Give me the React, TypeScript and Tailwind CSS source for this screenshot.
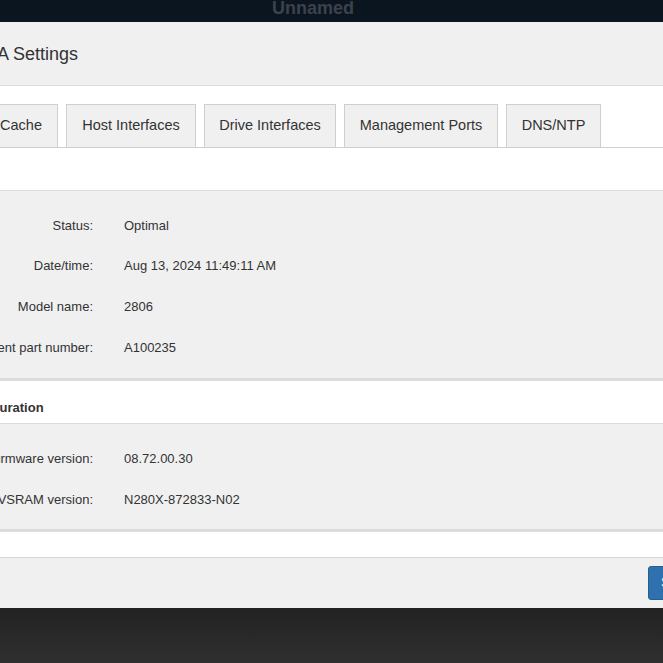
const rowsGeneral = [
  { label: "Status:", value: "Optimal" },
  { label: "Date/time:", value: "Aug 13, 2024 11:49:11 AM" },
  { label: "Model name:", value: "2806" },
  { label: "Replacement part number:", value: "A100235" },
];

const rowsFirmware = [
  { label: "Firmware version:", value: "08.72.00.30" },
  { label: "NVSRAM version:", value: "N280X-872833-N02" },
];

const tabs = [
  { name: "Base", w: "w-[65px]" },
  { name: "Cache", w: "w-[74px]" },
  { name: "Host Interfaces", w: "w-[130px]" },
  { name: "Drive Interfaces", w: "w-[132px]" },
  { name: "Management Ports", w: "w-[154px]" },
  { name: "DNS/NTP", w: "w-[95px]" },
];

function InfoRows({ rows }: { rows: { label: string; value: string }[] }) {
  return (
    <div className="flex flex-col">
      {rows.map((r) => (
        <div key={r.label} className="flex h-[40.67px] items-center text-[13px] text-[#333]">
          <div className="w-[213px] shrink-0 whitespace-nowrap text-right">{r.label}</div>
          <div className="pl-[31px] whitespace-nowrap">{r.value}</div>
        </div>
      ))}
    </div>
  );
}

export default function App() {
  return (
    <div
      className="relative h-[663px] w-[663px] overflow-hidden bg-[#2b2b2b]"
      style={{ fontFamily: '"Liberation Sans", Arial, sans-serif' }}
    >
      {/* top bar */}
      <div className="flex h-[22px] justify-center bg-[#0b1520] pr-[37px]">
        <span className="mt-[-1px] text-[18px] font-bold leading-none text-[#3b424b]">Unnamed</span>
      </div>

      {/* dialog */}
      <div className="ml-[-120px] w-[900px] bg-[#f0f0f0]">
        <div className="flex h-[64px] items-center border-b border-[#dcdcdc] pl-[35px] pt-[1px]">
          <h2 className="whitespace-nowrap text-[18px] text-[#333]">Controller A Settings</h2>
        </div>

        <div className="bg-white">
          <div className="flex gap-[8px] border-b border-[#cfcfcf] pl-[31px] pt-[18px]">
            {tabs.map((t) => (
              <div
                key={t.name}
                className={`${t.w} -mb-px flex h-[44px] shrink-0 items-center justify-center whitespace-nowrap border border-[#cfcfcf] text-[14.5px] text-[#333] ${
                  t.name === "Base" ? "border-b-white bg-white" : "bg-[#f0f0f0]"
                }`}
              >
                {t.name}
              </div>
            ))}
          </div>

          {/* general */}
          <div className="flex h-[43px] items-end border-b border-[#dcdcdc] pb-[5px] pl-[35px] text-[13px] font-bold text-[#333]">
            General
          </div>
          <div className="border-b-[3px] border-[#dcdcdc] bg-[#f0f0f0] pb-[10px] pt-[14px]">
            <InfoRows rows={rowsGeneral} />
          </div>

          {/* firmware */}
          <div className="flex h-[43px] items-end border-b border-[#dcdcdc] pb-[5px] pl-[17px] text-[13px] font-bold text-[#333]">
            Firmware Configuration
          </div>
          <div className="border-b-[3px] border-[#dcdcdc] bg-[#f0f0f0] pb-[9px] pt-[15px]">
            <InfoRows rows={rowsFirmware} />
          </div>

          <div className="h-[26px] border-b border-[#d6d6d6]" />
        </div>

        {/* footer */}
        <div className="flex h-[50px] items-start bg-[#f0f0f0] pl-[768px] pt-[8px]">
          <button className="h-[34px] rounded-[3px] border border-[#285e8e] bg-[#2f70ae] px-[12px] text-[14px] text-white">
            Save
          </button>
        </div>
      </div>

      <div className="h-[60px] bg-gradient-to-b from-[#222] to-[#313131]" />
    </div>
  );
}
